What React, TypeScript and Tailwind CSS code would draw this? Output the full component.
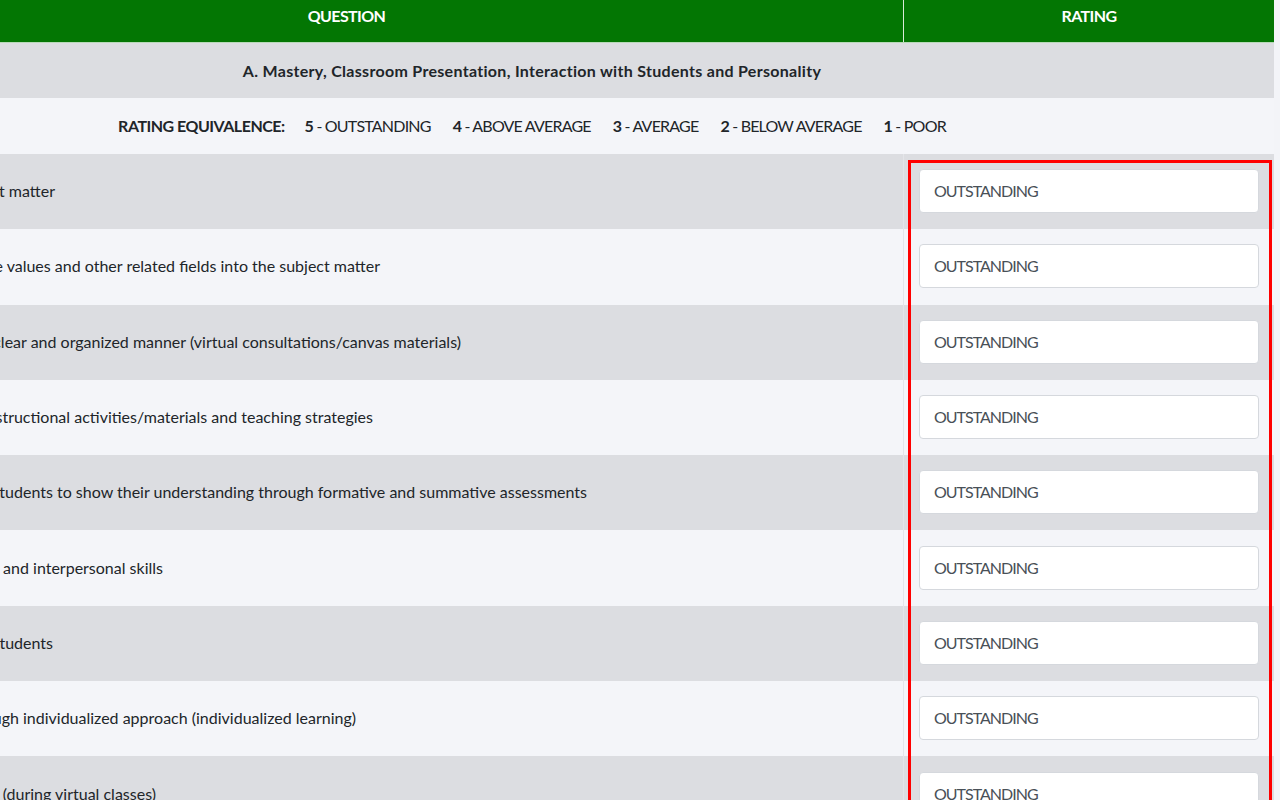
import React from "react";

const rows: { text: string; pr: string; bg: string }[] = [
  { text: "Demonstrates mastery of the subject matter", pr: "pr-[848px]", bg: "bg-[#dcdde1]" },
  { text: "Integrates the core values and other related fields into the subject matter", pr: "pr-[523px]", bg: "bg-[#f4f5f9]" },
  { text: "Presents the lessons in a clear and organized manner (virtual consultations/canvas materials)", pr: "pr-[442px]", bg: "bg-[#dcdde1]" },
  { text: "Uses varied and appropriate instructional activities/materials and teaching strategies", pr: "pr-[530px]", bg: "bg-[#f4f5f9]" },
  { text: "Provides opportunities for students to show their understanding through formative and summative assessments", pr: "pr-[316px]", bg: "bg-[#dcdde1]" },
  { text: "Demonstrates good communication and interpersonal skills", pr: "pr-[740px]", bg: "bg-[#f4f5f9]" },
  { text: "Maintains good rapport with students", pr: "pr-[850px]", bg: "bg-[#dcdde1]" },
  { text: "Addresses the needs of students through individualized approach (individualized learning)", pr: "pr-[547px]", bg: "bg-[#f4f5f9]" },
  { text: "Manages the class effectively (during virtual classes)", pr: "pr-[747px]", bg: "bg-[#dcdde1]" },
];

const scale = [
  { n: "5", label: "OUTSTANDING" },
  { n: "4", label: "ABOVE AVERAGE" },
  { n: "3", label: "AVERAGE" },
  { n: "2", label: "BELOW AVERAGE" },
  { n: "1", label: "POOR" },
];

export default function App() {
  return (
    <div
      className="relative w-[1280px] h-[800px] overflow-hidden bg-[#f3f4f8] text-[16px] text-[#212529]"
      style={{ fontFamily: '"Lato", "Open Sans", sans-serif' }}
    >
      <div className="ml-[-210px] w-[1484px] flex flex-col">
        {/* header */}
        <div className="flex h-[43px] bg-[#037603] border-b border-[#b9d9b9] text-white font-bold tracking-[-0.6px]">
          <div className="w-[1114px] flex justify-center pt-[4px] leading-[24px] border-r border-[#d9ead9]">QUESTION</div>
          <div className="w-[370px] flex justify-center pt-[4px] leading-[24px]">RATING</div>
        </div>
        {/* section */}
        <div className="h-[55px] bg-[#dcdde1] flex items-center justify-center font-bold tracking-[0.3px]">
          A. Mastery, Classroom Presentation, Interaction with Students and Personality
        </div>
        {/* rating equivalence */}
        <div className="h-[56px] bg-[#f4f5f9] flex items-center justify-center gap-[22px] tracking-[-0.8px]">
          <span className="font-bold mr-[-2px] tracking-[-0.5px]">RATING EQUIVALENCE:</span>
          {scale.map((s) => (
            <span key={s.n}>
              <span className="font-bold">{s.n}</span> - {s.label}
            </span>
          ))}
        </div>
        {/* rows */}
        {rows.map((r, i) => (
          <div key={i} className={`flex h-[75.3px] ${r.bg}`}>
            <div className={`w-[1114px] flex items-center justify-end overflow-hidden whitespace-nowrap border-r border-[#e4e5e9] pb-[1px] ${r.pr}`}>
              <span className="shrink-0">{r.text}</span>
            </div>
            <div className="w-[370px] flex items-center px-[15px] pb-[1px]">
              <div className="w-full h-[44px] bg-white border border-[#d5d8dd] rounded-[4px] flex items-center pl-[14px] text-[#495057] tracking-[-1px]">
                OUTSTANDING
              </div>
            </div>
          </div>
        ))}
      </div>
      {/* annotation overlay */}
      <div className="absolute left-[908px] top-[160px] w-[364px] h-[700px] border-[3px] border-[#ff0000] pointer-events-none" />
    </div>
  );
}
